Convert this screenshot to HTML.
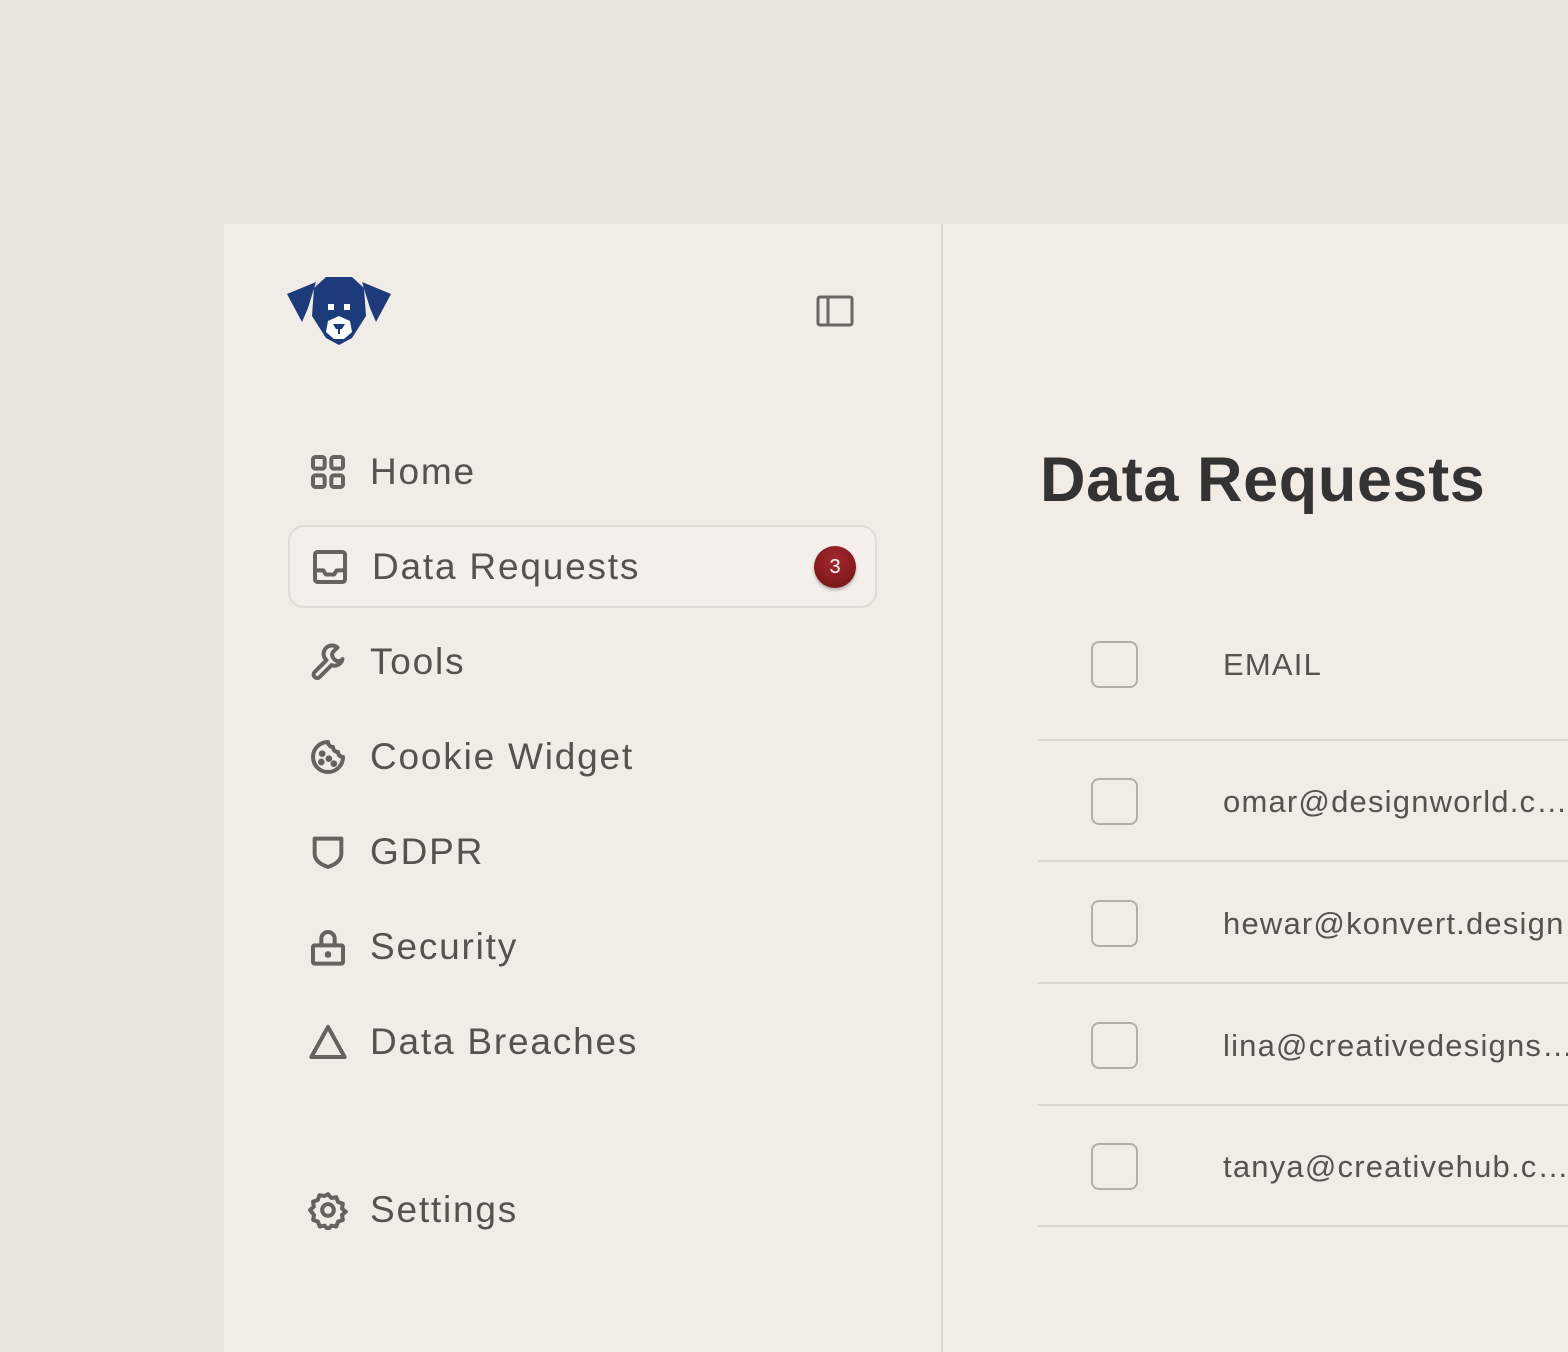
<!DOCTYPE html>
<html><head><meta charset="utf-8"><style>
*{margin:0;padding:0;box-sizing:border-box}
body{width:1568px;height:1352px;background:#ebe5df;font-family:"Liberation Sans",sans-serif;position:relative;overflow:hidden}
.panel{position:absolute;left:224px;top:224px;width:1344px;height:1128px;background:#f1ece6}
.div{position:absolute;left:941px;top:224px;width:2px;height:1128px;background:#ddd6cf}
.nav{position:absolute;left:308px;display:flex;align-items:center;font-size:37px;color:#56524e;letter-spacing:1.8px}
.nav svg{width:40px;height:40px;margin-right:22px;fill:none;stroke:#66625e;stroke-width:2.4;stroke-linecap:round;stroke-linejoin:round}
.active{position:absolute;left:288px;top:525px;width:589px;height:83px;border:2px solid #e3dcd5;border-radius:16px;background:#f4efea}
.badge{position:absolute;left:814px;top:546px;width:42px;height:42px;border-radius:50%;background:radial-gradient(circle at 50% 35%,#a52a2e,#6e1114);color:#fff;font-size:20px;display:flex;align-items:center;justify-content:center;box-shadow:0 2px 3px rgba(0,0,0,.3)}
h1{position:absolute;left:1040px;top:444px;font-size:63px;font-weight:600;color:#333;letter-spacing:0.6px;white-space:nowrap}
.cb{position:absolute;left:1091px;width:47px;height:47px;border:2px solid #b5aea8;border-radius:8px}
.t{position:absolute;left:1223px;font-size:31px;color:#56524e;letter-spacing:1.2px;white-space:nowrap}
.line{position:absolute;left:1038px;width:530px;height:2px;background:#ddd6cf}
</style></head><body>
<div class="panel"></div><div class="div"></div>
<svg style="position:absolute;left:286px;top:276px" width="106" height="70" viewBox="0 0 106 70"><g fill="#1d3a7a">
<path d="M1 18 L30 6 L22 32 L16 46 Z"/><path d="M105 18 L76 6 L84 32 L90 46 Z"/>
<path d="M40 1 L66 1 L78 12 L80 40 L66 62 L53 69 L40 62 L26 40 L28 12 Z"/></g>
<g fill="#fff"><rect x="42" y="28" width="6" height="6"/><rect x="58" y="28" width="6" height="6"/>
<path d="M53 40 L64 45 L66 56 L58 63 L48 63 L40 56 L42 45 Z"/></g>
<path fill="#1d3a7a" d="M47 48 h12 l-3 5 h-2 v5 h-2 v-5 h-2 z"/></svg>
<svg style="position:absolute;left:816px;top:295px" width="38" height="32" viewBox="0 0 38 32" fill="none" stroke="#6a6661" stroke-width="3"><rect x="2" y="2" width="34" height="28" rx="2"/><path d="M12 2v28"/></svg>
<div class="active"></div>
<div class="nav" style="top:451px"><svg viewBox="0 0 24 24"><rect x="3" y="3" width="7" height="7" rx="1.5"/><rect x="14" y="3" width="7" height="7" rx="1.5"/><rect x="3" y="14" width="7" height="7" rx="1.5"/><rect x="14" y="14" width="7" height="7" rx="1.5"/></svg>Home</div>
<div class="nav" style="top:546px;left:310px"><svg viewBox="0 0 24 24"><rect x="3" y="3" width="18" height="18" rx="1.5"/><path d="M3 14h5l1.5 2.5h5L16 14h5"/></svg>Data Requests</div>
<div class="badge">3</div>
<div class="nav" style="top:641px"><svg viewBox="0 0 24 24"><path d="M14.7 6.3a4 4 0 0 0 5 5l1-1a5 5 0 0 1-6.6 3.6L7 21a2.1 2.1 0 0 1-3-3l7.1-7.1A5 5 0 0 1 17.7 3.3z"/></svg>Tools</div>
<div class="nav" style="top:736px"><svg viewBox="0 0 24 24"><path d="M12 3a9 9 0 1 0 9 9 3 3 0 0 1-3-3 3 3 0 0 1-3-3 3 3 0 0 1-3-3z"/><circle cx="8.5" cy="10" r=".8" fill="#66625e"/><circle cx="8" cy="15" r=".8" fill="#66625e"/><circle cx="12.5" cy="13" r=".8" fill="#66625e"/><circle cx="15.5" cy="16" r=".8" fill="#66625e"/></svg>Cookie Widget</div>
<div class="nav" style="top:831px"><svg viewBox="0 0 24 24"><path d="M4 4h16v9c0 4-3.5 6.5-8 8-4.5-1.5-8-4-8-8z"/></svg>GDPR</div>
<div class="nav" style="top:926px"><svg viewBox="0 0 24 24"><rect x="3" y="11" width="18" height="11" rx="1"/><path d="M8 11V7a4 4 0 0 1 8 0v4"/><circle cx="12" cy="16.5" r=".8" fill="#66625e"/></svg>Security</div>
<div class="nav" style="top:1021px"><svg viewBox="0 0 24 24"><path d="M12 3L2 21h20z"/></svg>Data Breaches</div>
<div class="nav" style="top:1189px"><svg viewBox="0 0 24 24"><path d="M12 2.5l2 2.3 3-.5 1 2.9 2.9 1-.5 3 2.3 1.8-2.3 2 .5 3-2.9 1-1 2.9-3-.5-2 2.3-2-2.3-3 .5-1-2.9-2.9-1 .5-3L1.2 12l2.3-2-.5-3 2.9-1 1-2.9 3 .5z"/><circle cx="12" cy="12" r="3.5"/></svg>Settings</div>
<h1>Data Requests</h1>
<div class="cb" style="top:641px"></div><div class="t" style="top:647px">EMAIL</div>
<div class="line" style="top:739px"></div>
<div class="cb" style="top:778px"></div><div class="t" style="top:784px">omar@designworld.c…</div>
<div class="line" style="top:860px"></div>
<div class="cb" style="top:900px"></div><div class="t" style="top:906px">hewar@konvert.design</div>
<div class="line" style="top:982px"></div>
<div class="cb" style="top:1022px"></div><div class="t" style="top:1028px">lina@creativedesigns…</div>
<div class="line" style="top:1104px"></div>
<div class="cb" style="top:1143px"></div><div class="t" style="top:1149px">tanya@creativehub.c…</div>
<div class="line" style="top:1225px"></div>
</body></html>
